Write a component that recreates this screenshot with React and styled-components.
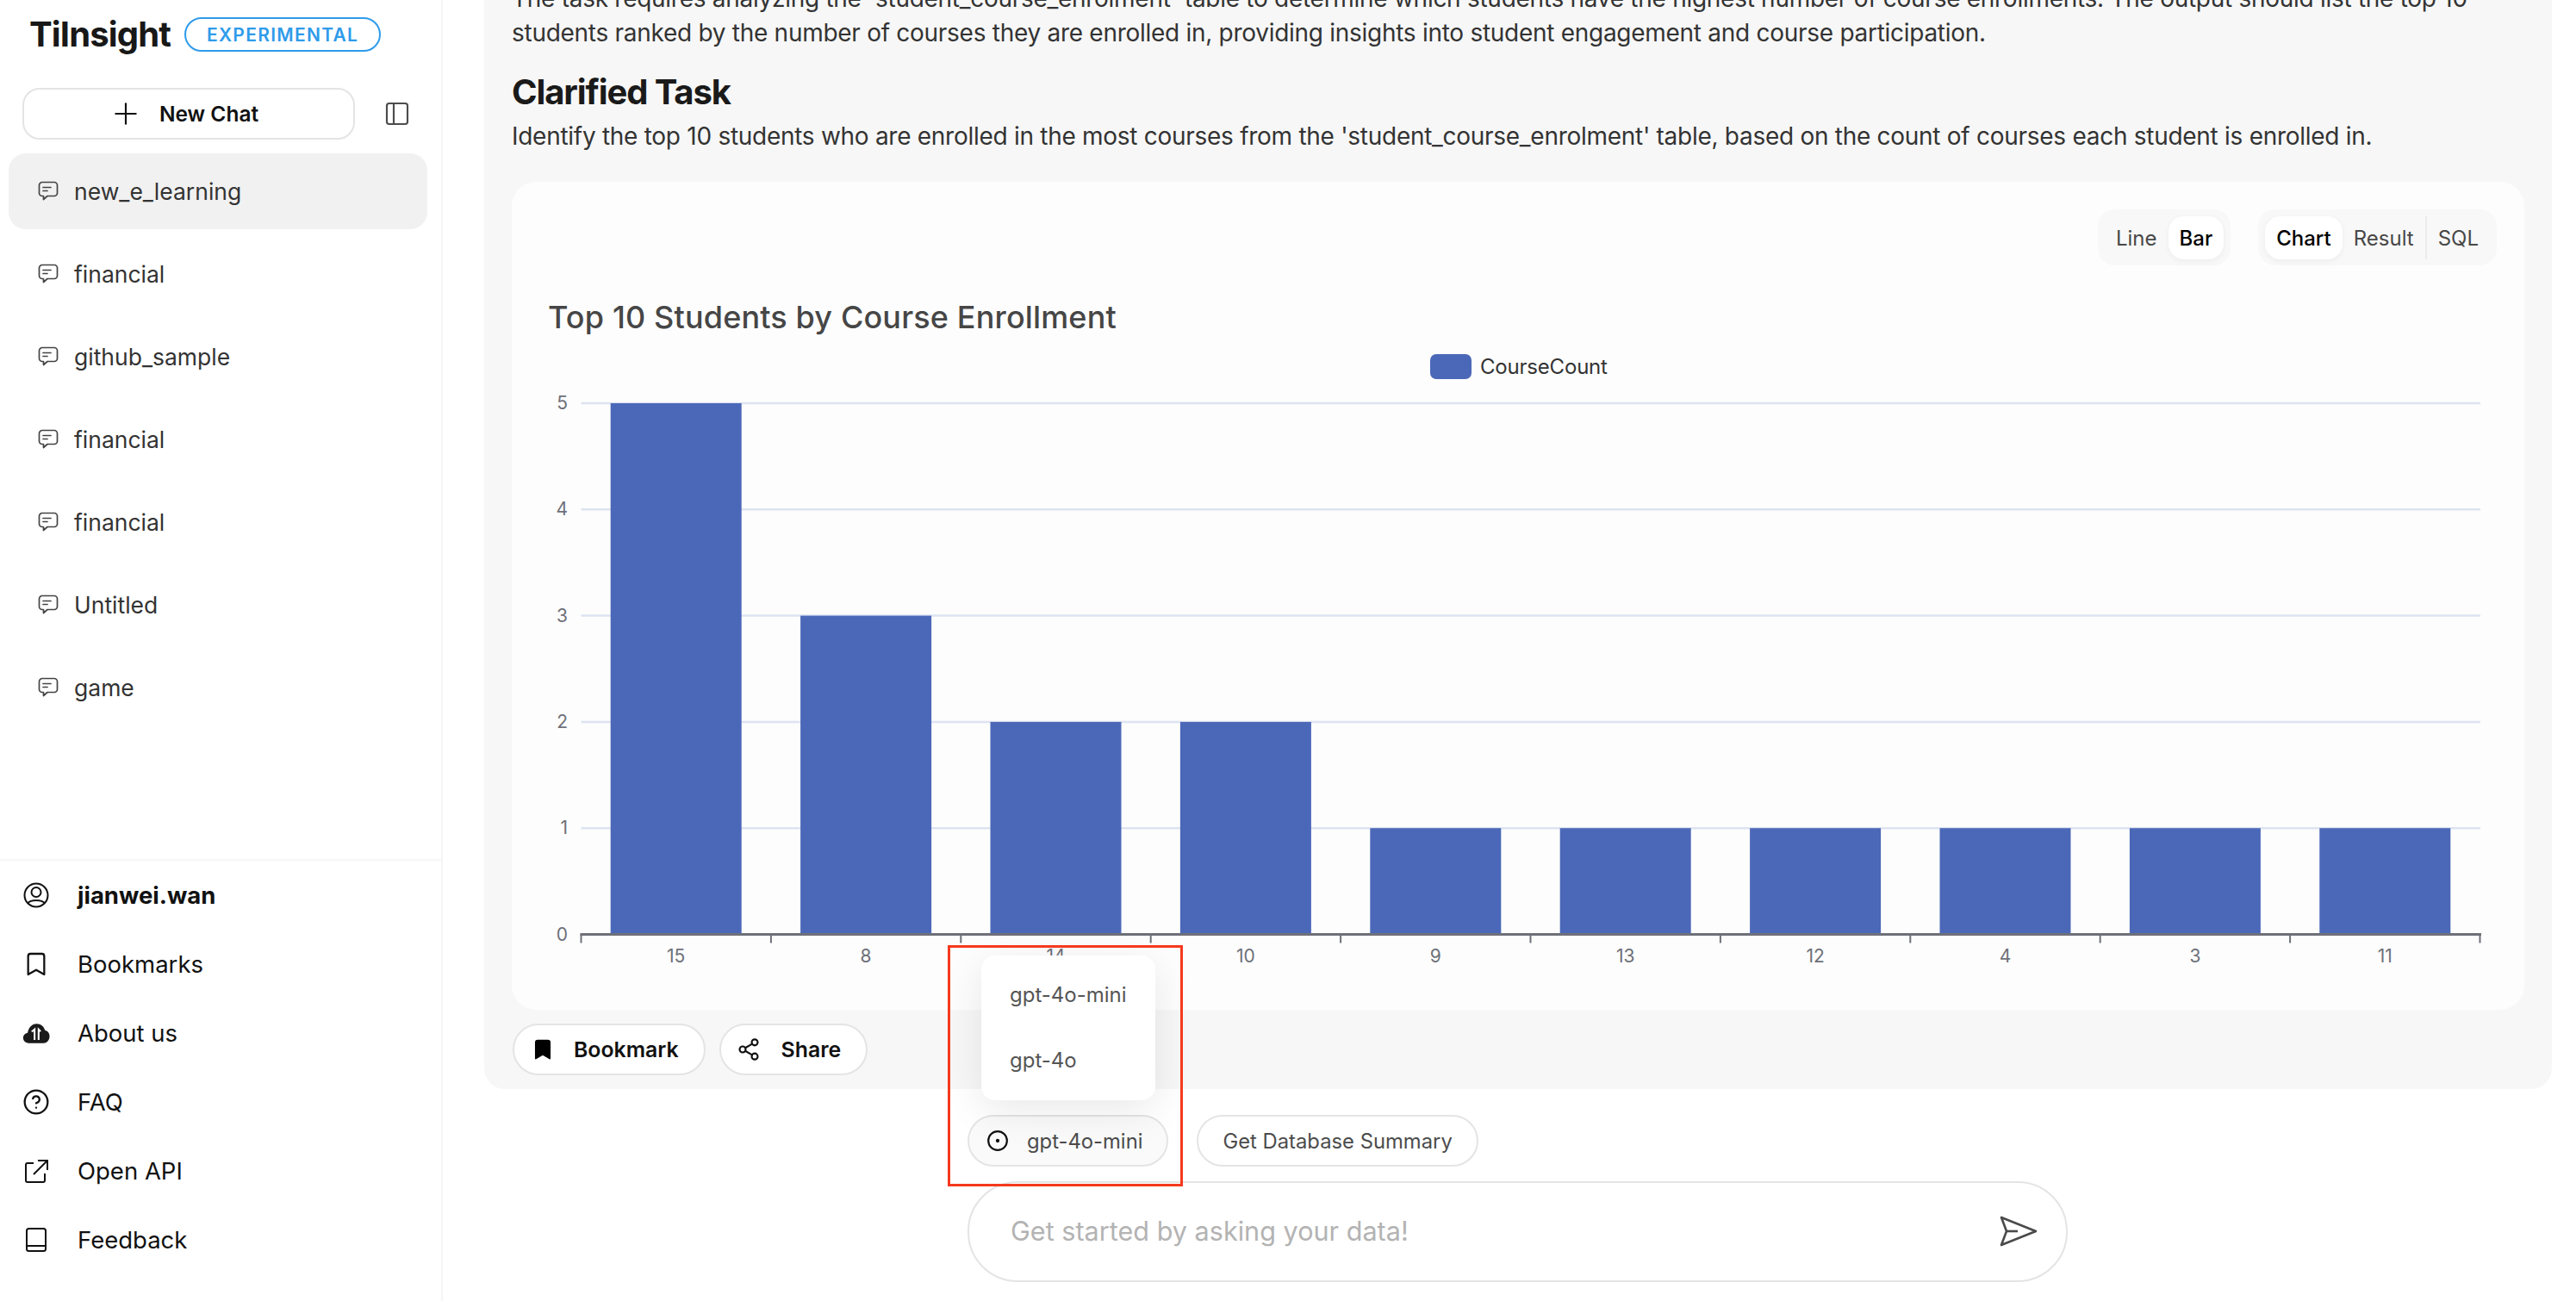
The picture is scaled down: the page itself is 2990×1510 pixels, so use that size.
import React from "react";
import styled, { createGlobalStyle } from "styled-components";
import { Plus, PanelLeft, CircleHelp, Bookmark as BookmarkIcon, Share2, CircleDot } from "lucide-react";

const Global = createGlobalStyle`
  html, body { margin: 0; padding: 0; background: #fff; height: 100%; overflow: hidden; }
  body { font-family: Inter, "Liberation Sans", sans-serif; color: #333; }
  * { box-sizing: border-box; }
`;

const Page = styled.div`display: flex; height: 1510px; width: 2990px; overflow: hidden; background: #fff;`;

const Sidebar = styled.aside`
  width: 514px; flex: none; display: flex; flex-direction: column; justify-content: space-between;
  border-right: 2px solid #f5f5f5; height: 100%;
`;
const Brand = styled.div`display: flex; align-items: center; gap: 16px; padding: 16px 0 0 34px; height: 64px;`;
const Logo = styled.div`font-size: 40px; font-weight: 700; color: #181818; letter-spacing: -0.85px; line-height: 48px;`;
const Badge = styled.div`
  height: 40px; width: 228px; border: 2px solid #2f9bea; border-radius: 20px; color: #2f9bea;
  font-size: 21px; font-weight: 600; letter-spacing: 1.3px; display: flex; align-items: center; justify-content: center;
`;
const NewRow = styled.div`display: flex; align-items: center; gap: 33px; padding: 38px 0 0 26px;`;
const NewChat = styled.button`
  width: 386px; height: 60px; border: 2px solid #e4e4e4; border-radius: 20px; background: #fff; display: flex;
  align-items: center; justify-content: center; gap: 19px; font: 600 24.5px Inter, sans-serif; color: #111; padding: 0 12px 0 0;
`;
const ChatList = styled.div`padding: 16px 16px 0 10px; display: flex; flex-direction: column; gap: 8px;`;
const ChatItem = styled.div`
  height: 88px; border-radius: 20px; display: flex; align-items: center; gap: 18px; padding-left: 34px;
  font-size: 26.5px; color: #333; background: ${p => (p.$active ? "#f1f1f1" : "transparent")};
`;
const SideFoot = styled.div`border-top: 2px solid #f7f7f7; height: 513px; padding: 0;`;
const FootItem = styled.div`
  height: 80px; display: flex; align-items: center; padding-left: 26px; gap: 32px; font-size: 27.5px; color: #111;
  font-weight: ${p => (p.$bold ? 700 : 400)};
`;
const FootIcon = styled.span`width: 32px; height: 32px; display: flex; align-items: center; justify-content: center; flex: none;`;

const Main = styled.main`flex: 1; display: flex; flex-direction: column; min-width: 0; position: relative;`;
const Panel = styled.section`
  margin: 0 28px 0 48px; padding: 0 32px 17px; height: 1264px; background: #f7f7f7; border-radius: 0 0 24px 24px;
`;
const Para = styled.p`margin: 0; font-size: 28px; line-height: 40px; color: #333; letter-spacing: -0.28px;`;
const FirstPara = styled(Para)`margin-top: -22px;`;
const Heading = styled.h2`margin: 21px 0 3px; font-size: 40px; line-height: 56px; font-weight: 700; color: #1a1a1a; letter-spacing: -1.1px;`;
const Card = styled.div`
  margin-top: 33px; height: 961px; background: #fdfdfd; border-radius: 28px; display: flex; flex-direction: column;
`;
const ToggleRow = styled.div`display: flex; justify-content: flex-end; gap: 32px; padding: 32px 32px 0 0;`;
const ToggleGroup = styled.div`
  height: 65px; padding: 8px; background: #f8f8f8; border-radius: 20px; display: flex; align-items: flex-start;
`;
const ToggleBtn = styled.div`
  height: 50px; padding: 0 13px; border-radius: 18px; display: flex; align-items: center; font-size: 24px;
  color: ${p => (p.$on ? "#000" : "#484848")};
  background: ${p => (p.$on ? "#fff" : "transparent")};
  font-weight: ${p => (p.$on ? 500 : 400)};
  box-shadow: ${p => (p.$on ? "0 2px 6px rgba(0,0,0,.05)" : "none")};
`;
const Divider = styled.div`width: 2px; height: 50px; background: #ececec;`;
const ChartTitle = styled.h3`margin: 38px 0 0 42px; font-size: 36px; line-height: 44px; font-weight: 500; color: #464646; letter-spacing: 0.15px;`;
const ChartSvg = styled.svg`display: block; width: 2336px; height: 772px; margin-top: 10px; flex: none;`;

const Actions = styled.div`display: flex; gap: 16px; margin: 16px 0 0 1px;`;
const ActionBtn = styled.button`
  height: 60px; padding: 0 29px 0 ${p => p.$pl}px; border: 2px solid #e4e4e4; border-radius: 30px; background: #fff;
  display: flex; align-items: center; gap: ${p => p.$gap}px; font: 600 24.8px Inter, sans-serif; color: #111;
`;

const Composer = styled.div`padding: 30px 0 0 609px; display: flex; flex-direction: column; gap: 17px;`;
const PillRow = styled.div`display: flex; gap: 33px; position: relative;`;
const Pill = styled.div`
  height: 60px; border: 2px solid #e4e4e4; border-radius: 30px; display: flex; align-items: center; gap: 21px;
  padding: 0 28px 0 ${p => p.$pl}px; font-size: 23.8px; color: #4c4c4c; background: ${p => (p.$on ? "#fafafa" : "#fff")};
  position: relative;
`;
const Menu = styled.div`
  position: absolute; left: 14px; bottom: 75px; width: 202px; height: 168px; background: #fff; border-radius: 16px;
  box-shadow: 0 12px 48px rgba(0,0,0,.09); display: flex; flex-direction: column; padding: 7px 0 0 33px;
`;
const MenuItem = styled.div`height: 76px; display: flex; align-items: center; font-size: 24px; color: #555;`;
const InputBox = styled.div`
  width: 1277px; height: 117px; border: 2px solid #e4e4e4; border-radius: 58px; display: flex; align-items: center;
  justify-content: space-between; padding: 0 33px 2px 48px; font-size: 30.6px; color: #b3b3b3;
`;
const RedMark = styled.div`
  position: absolute; left: 586px; top: 1097px; width: 273px; height: 280px; border: 3px solid #f5391e; pointer-events: none;
`;

const chats = ["new_e_learning", "financial", "github_sample", "financial", "financial", "Untitled", "game"];
const values = [["15", 5], ["8", 3], ["14", 2], ["10", 2], ["9", 1], ["13", 1], ["12", 1], ["4", 1], ["3", 1], ["11", 1]];
const X0 = 674.5, STEP = 220.4, Y0 = 1084.5, YS = 123.3;

const ChatIcon = () => (
  <svg width="24" height="24" viewBox="0 0 24 24" fill="none" stroke="#444" strokeWidth="1.700" strokeLinejoin="round" strokeLinecap="round">
    <path d="M5 1.500h14a3.500 3.500 0 0 1 3.500 3.500v9a3.500 3.500 0 0 1-3.500 3.500h-8l-4.500 4v-4H5A3.500 3.500 0 0 1 1.500 14V5A3.500 3.500 0 0 1 5 1.500z" />
    <path d="M6 7.500h9M6 11.500h5" />
  </svg>
);
const CloudIcon = () => (
  <svg width="34" height="26" viewBox="0 0 34 26">
    <path fill="#1a1a1a" d="M9 25.500C4 25.500 1 22.500 1 19c0-3.400 2.300-5.800 5.500-6.300C7.500 6 11.800 1.500 17.500 1.500c5.200 0 9.300 3.500 10.500 8.300 3.500.6 5.500 3.500 5.500 7.200 0 5-3.500 8.500-7.500 8.500z" />
    <path fill="none" stroke="#fff" strokeWidth="2.200" d="M11.500 11.500l3.500-3v13M20 21.500V8.500l2.500 2.500" />
  </svg>
);
const UserIcon = () => (
  <svg width="30" height="30" viewBox="0 0 30 30" fill="none" stroke="#111" strokeWidth="2">
    <circle cx="15" cy="15" r="13.500" />
    <circle cx="15" cy="11.500" r="5.500" />
    <path d="M5 24.500c2-2.800 5.500-3.500 10-3.500s8 .7 10 3.500" />
  </svg>
);
const OpenIcon = () => (
  <svg width="28" height="28" viewBox="0 0 28 28" fill="none" stroke="#111" strokeWidth="2">
    <path d="M11 5H4a2 2 0 0 0-2 2v18a2 2 0 0 0 2 2h18a2 2 0 0 0 2-2v-8" />
    <path d="M11 18l15-15M16 2h11v11" />
  </svg>
);
const BookIcon = () => (
  <svg width="26" height="30" viewBox="0 0 26 30" fill="none" stroke="#111" strokeWidth="2">
    <rect x="2" y="2" width="22" height="26" rx="2.500" />
    <path d="M2 22h22" />
  </svg>
);
const SendIcon = () => (
  <svg width="44" height="36" viewBox="0 0 44 36" fill="none" stroke="#4a4a4a" strokeWidth="2.600" strokeLinejoin="round">
    <path d="M2 2l40 16L2 34l6-16z" />
    <path d="M8 18h13" />
  </svg>
);

export default function App() {
  return (
    <>
      <Global />
      <Page>
        <Sidebar>
          <div>
            <Brand>
              <Logo>TiInsight</Logo>
              <Badge>EXPERIMENTAL</Badge>
            </Brand>
            <NewRow>
              <NewChat><Plus size={40} strokeWidth={1.3} color="#111" />New Chat</NewChat>
              <PanelLeft size={32} strokeWidth={1.6} color="#4c4c4c" />
            </NewRow>
            <ChatList>
              {chats.map((c, i) => (
                <ChatItem key={i} $active={i === 0}>
                  <ChatIcon />
                  {c}
                </ChatItem>
              ))}
            </ChatList>
          </div>
          <SideFoot>
            <FootItem $bold><FootIcon><UserIcon /></FootIcon>jianwei.wan</FootItem>
            <FootItem><FootIcon><BookmarkIcon size={32} strokeWidth={1.7} color="#111" /></FootIcon>Bookmarks</FootItem>
            <FootItem><FootIcon><CloudIcon /></FootIcon>About us</FootItem>
            <FootItem><FootIcon><CircleHelp size={32} strokeWidth={1.7} color="#111" /></FootIcon>FAQ</FootItem>
            <FootItem><FootIcon><OpenIcon /></FootIcon>Open API</FootItem>
            <FootItem><FootIcon><BookIcon /></FootIcon>Feedback</FootItem>
          </SideFoot>
        </Sidebar>
        <Main>
          <Panel>
            <FirstPara>
              The task requires analyzing the `student_course_enrolment` table to determine which students have the highest number of course enrollments. The output should list the top 10 students ranked by the number of courses they are enrolled in, providing insights into student engagement and course participation.
            </FirstPara>
            <Heading>Clarified Task</Heading>
            <Para>Identify the top 10 students who are enrolled in the most courses from the 'student_course_enrolment' table, based on the count of courses each student is enrolled in.</Para>
            <Card>
              <ToggleRow>
                <ToggleGroup>
                  <ToggleBtn>Line</ToggleBtn>
                  <ToggleBtn $on>Bar</ToggleBtn>
                </ToggleGroup>
                <ToggleGroup>
                  <ToggleBtn $on>Chart</ToggleBtn>
                  <ToggleBtn>Result</ToggleBtn>
                  <Divider />
                  <ToggleBtn>SQL</ToggleBtn>
                </ToggleGroup>
              </ToggleRow>
              <ChartTitle>Top 10 Students by Course Enrollment</ChartTitle>
              <ChartSvg viewBox="594 400 2336 772" fontFamily="Inter, sans-serif">
                <rect x="1660" y="411" width="48" height="29" rx="7" fill="#4b68b8" />
                <text x="1718" y="434" fontSize="24" letterSpacing="-0.2" fill="#333">CourseCount</text>
                {[0, 1, 2, 3, 4, 5].map(n => (
                  <g key={n}>
                    {n > 0 && <line x1={X0} x2={2879} y1={Y0 - n * YS} y2={Y0 - n * YS} stroke="#dde3f1" strokeWidth="2.500" />}
                    <text x="659" y={Y0 - n * YS + 7} fontSize="21" fill="#6e7079" textAnchor="end">{n}</text>
                  </g>
                ))}
                {values.map(([label, v], i) => {
                  const cx = X0 + STEP * (i + 0.5);
                  return (
                    <g key={i}>
                      <rect x={cx - 76} y={Y0 - v * YS} width="152" height={v * YS} fill="#4b68b8" />
                      <text x={cx} y="1117" fontSize="21" fill="#6e7079" textAnchor="middle">{label}</text>
                    </g>
                  );
                })}
                {Array.from({ length: 11 }, (_, i) => (
                  <line key={i} x1={X0 + STEP * i} x2={X0 + STEP * i} y1={Y0} y2={Y0 + 10} stroke="#6e7079" strokeWidth="2" />
                ))}
                <line x1={X0 - 1} x2={2880} y1={Y0} y2={Y0} stroke="#6e7079" strokeWidth="3" />
              </ChartSvg>
            </Card>
            <Actions>
              <ActionBtn $gap={22} $pl={19}><BookmarkIcon size={28} fill="#000" color="#000" strokeWidth={1.5} />Bookmark</ActionBtn>
              <ActionBtn $gap={24} $pl={18}><Share2 size={28} strokeWidth={1.8} color="#111" />Share</ActionBtn>
            </Actions>
          </Panel>
          <Composer>
            <PillRow>
              <Pill $on $pl={20}>
                <CircleDot size={26} strokeWidth={2} color="#111" />
                gpt-4o-mini
                <Menu>
                  <MenuItem>gpt-4o-mini</MenuItem>
                  <MenuItem>gpt-4o</MenuItem>
                </Menu>
              </Pill>
              <Pill $pl={28}>Get Database Summary</Pill>
            </PillRow>
            <InputBox>
              Get started by asking your data!
              <SendIcon />
            </InputBox>
          </Composer>
          <RedMark />
        </Main>
      </Page>
    </>
  );
}
